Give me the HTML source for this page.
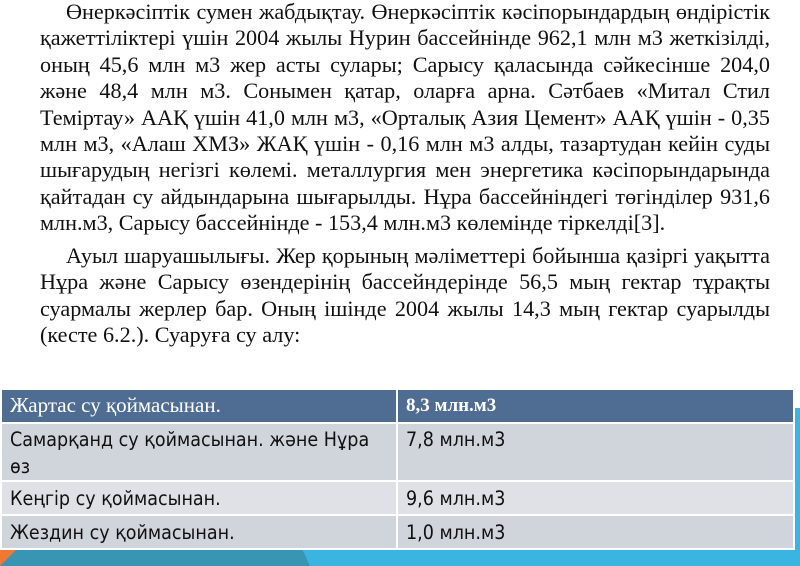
<!DOCTYPE html>
<html><head><meta charset="utf-8"><style>
body{margin:0;width:800px;height:566px;overflow:hidden;background:#fff;position:relative;font-family:"Liberation Serif","DejaVu Serif",serif;}
.p{position:absolute;left:40px;width:730px;font-size:22.2px;line-height:26.4px;color:#111;}
.l{display:block;text-align:justify;text-align-last:justify;white-space:nowrap;height:26.4px;}
.l.e{text-align-last:left;}
.i{padding-left:26px;}
table{position:absolute;left:0;top:388px;width:795px;border-collapse:collapse;font-family:"DejaVu Sans Condensed","DejaVu Sans",sans-serif;font-size:19.5px;color:#111;}
td{border:2px solid #fff;padding:0 8px;vertical-align:top;line-height:27px;}
tr.h td{background:#4f6d92;color:#fff;height:30px;font-family:"Liberation Serif",serif;font-size:21px;padding-top:2px;}
tr.h td.b{font-weight:bold;font-size:19px;}
tr.a td{background:#d0d4db;}
tr.c td{background:#dfe1e6;}
</style></head><body>
<div class="p" style="top:-1px">
<span class="l i">Өнеркәсіптік сумен жабдықтау. Өнеркәсіптік кәсіпорындардың өндірістік</span>
<span class="l">қажеттіліктері үшін 2004 жылы Нурин бассейнінде 962,1 млн м3 жеткізілді,</span>
<span class="l">оның 45,6 млн м3 жер асты сулары; Сарысу қаласында сәйкесінше 204,0</span>
<span class="l">және 48,4 млн м3. Сонымен қатар, оларға арна. Сәтбаев «Митал Стил</span>
<span class="l">Теміртау» ААҚ үшін 41,0 млн м3, «Орталық Азия Цемент» ААҚ үшін - 0,35</span>
<span class="l">млн м3, «Алаш ХМЗ» ЖАҚ үшін - 0,16 млн м3 алды, тазартудан кейін суды</span>
<span class="l">шығарудың негізгі көлемі. металлургия мен энергетика кәсіпорындарында</span>
<span class="l">қайтадан су айдындарына шығарылды. Нұра бассейніндегі төгінділер 931,6</span>
<span class="l e">млн.м3, Сарысу бассейнінде - 153,4 млн.м3 көлемінде тіркелді[3].</span>
</div>
<div class="p" style="top:243px">
<span class="l i">Ауыл шаруашылығы. Жер қорының мәліметтері бойынша қазіргі уақытта</span>
<span class="l">Нұра және Сарысу өзендерінің бассейндерінде 56,5 мың гектар тұрақты</span>
<span class="l">суармалы жерлер бар. Оның ішінде 2004 жылы 14,3 мың гектар суарылды</span>
<span class="l e">(кесте 6.2.). Суаруға су алу:</span>
</div>
<div style="position:absolute;left:0;top:544px;width:800px;height:22px;background:#3ab4e0"></div>
<div style="position:absolute;left:0;top:544px;width:310px;height:22px;background:#3895b4;clip-path:polygon(0 0,300px 0,310px 22px,0 22px)"></div>
<div style="position:absolute;left:0;top:544px;width:22px;height:22px;background:#f07830;clip-path:polygon(0 0,22px 0,0 22px)"></div>
<div style="position:absolute;left:793px;top:408px;width:7px;height:140px;background:#3ab4e0"></div>
<table>
<tr class="h"><td style="width:378px">Жартас су қоймасынан.</td><td class="b">8,3 млн.м3</td></tr>
<tr class="a"><td style="height:52px;padding-top:2px">Самарқанд су қоймасынан. және Нұра<br>өз</td><td style="padding-top:2px">7,8 млн.м3</td></tr>
<tr class="c"><td style="height:29px;padding-top:3px">Кеңгір су қоймасынан.</td><td style="padding-top:3px">9,6 млн.м3</td></tr>
<tr class="a"><td style="height:29px;padding-top:3px">Жездин су қоймасынан.</td><td style="padding-top:3px">1,0 млн.м3</td></tr>
</table>
</body></html>
